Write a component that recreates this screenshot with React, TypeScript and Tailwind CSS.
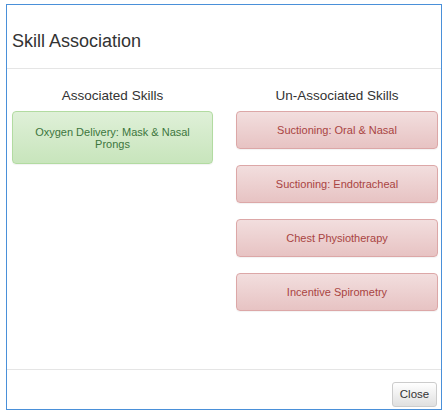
import React from 'react';

const associated = ['Oxygen Delivery: Mask & Nasal Prongs'];
const unassociated = [
  'Suctioning: Oral & Nasal',
  'Suctioning: Endotracheal',
  'Chest Physiotherapy',
  'Incentive Spirometry',
];

const SkillAssociation: React.FC = () => {
  return (
    <div className="w-[444px] h-[415px] bg-white pt-[4px] pl-[6px] font-['Liberation_Sans',Arial,sans-serif]">
      <div className="w-[436px] h-[406px] border border-[#4a90d9] flex flex-col bg-white">
        {/* Header */}
        <div className="h-[64px] border-b border-[#e5e5e5] flex items-center pl-[5px] pt-[8px]">
          <h1 className="text-[18px] text-[#333] leading-none">Skill Association</h1>
        </div>

        {/* Body */}
        <div className="flex-1 grid grid-cols-[201px_202px] gap-x-[23px] pl-[5px] pt-[17px]">
          <div>
            <h2 className="text-[13.5px] text-[#333] text-center leading-[20px] mb-[5px]">Associated Skills</h2>
            <div className="flex flex-col gap-[16px]">
              {associated.map((s) => (
                <div
                  key={s}
                  className="h-[53px] flex items-center justify-center text-center px-[12px] rounded-[4px] border border-[#b2dba1] bg-gradient-to-b from-[#dff0d8] to-[#c8e5bc] text-[#3c763d] text-[11px] leading-[12px] shadow-[0_1px_1px_rgba(0,0,0,0.05)]"
                >
                  {s}
                </div>
              ))}
            </div>
          </div>
          <div>
            <h2 className="text-[13.5px] text-[#333] text-center leading-[20px] mb-[5px]">Un-Associated Skills</h2>
            <div className="flex flex-col gap-[16px]">
              {unassociated.map((s) => (
                <div
                  key={s}
                  className="h-[38px] flex items-center justify-center text-center px-[15px] rounded-[4px] border border-[#dca7a7] bg-gradient-to-b from-[#f2dede] to-[#e7c3c3] text-[#a94442] text-[11px] leading-[13px] shadow-[0_1px_1px_rgba(0,0,0,0.05)]"
                >
                  {s}
                </div>
              ))}
            </div>
          </div>
        </div>

        {/* Footer */}
        <div className="h-[40px] border-t border-[#e5e5e5] flex items-start justify-end pr-[4px] pt-[12px]">
          <button className="h-[25px] w-[45px] rounded-[3px] border border-[#ccc] bg-gradient-to-b from-white to-[#e0e0e0] text-[11.5px] text-[#333] leading-none">
            Close
          </button>
        </div>
      </div>
    </div>
  );
};

export default function App() {
  return <SkillAssociation />;
}
